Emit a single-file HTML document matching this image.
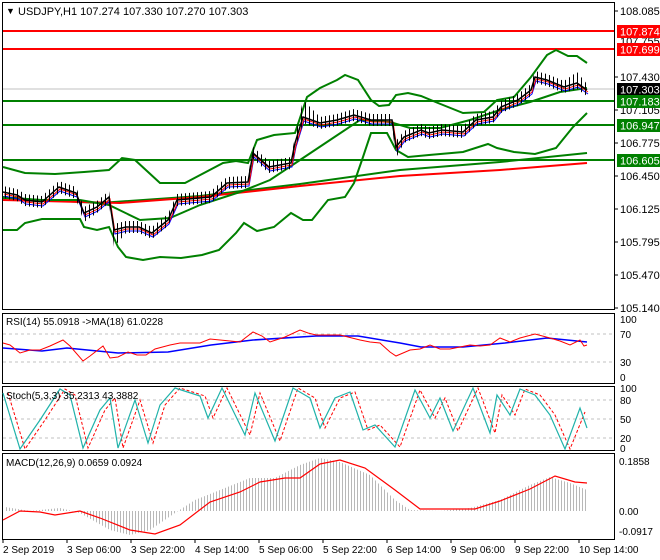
<!DOCTYPE html>
<html><head><meta charset="utf-8"><style>
body{margin:0;background:#fff;}
svg{display:block;font-family:"Liberation Sans",sans-serif;}
</style></head><body>
<svg width="660" height="560" viewBox="0 0 660 560" xmlns="http://www.w3.org/2000/svg">
<defs>
<pattern id="vl" width="3" height="10" patternUnits="userSpaceOnUse"><rect x="0" y="0" width="1" height="10" fill="#b8b8b8"/></pattern>
<pattern id="cl" width="4" height="10" patternUnits="userSpaceOnUse"><rect x="1" y="0" width="1" height="10" fill="#000"/></pattern>
</defs>
<rect width="660" height="560" fill="#fff"/>
<!-- panels -->
<rect x="2.5" y="2.5" width="612" height="307" fill="none" stroke="#000"/>
<rect x="2.5" y="313.5" width="612" height="70" fill="none" stroke="#000"/>
<rect x="2.5" y="386.5" width="612" height="64" fill="none" stroke="#000"/>
<rect x="2.5" y="453.5" width="612" height="86" fill="none" stroke="#000"/>

<!-- horizontal levels -->
<line x1="3" y1="89" x2="614" y2="89" stroke="#c0c0c0"/>
<line x1="3" y1="31" x2="614" y2="31" stroke="#f00" stroke-width="2"/>
<line x1="3" y1="49" x2="614" y2="49" stroke="#f00" stroke-width="2"/>
<line x1="3" y1="101" x2="614" y2="101" stroke="#008000" stroke-width="2"/>
<line x1="3" y1="125" x2="614" y2="125" stroke="#008000" stroke-width="2"/>
<line x1="3" y1="160" x2="614" y2="160" stroke="#008000" stroke-width="2"/>

<!-- MAs -->
<polyline fill="none" stroke="#008000" stroke-width="2" points="3,198 100,203 200,196 300,184 400,170 500,162 587,153"/>
<polyline fill="none" stroke="#f00" stroke-width="2" points="3,200 120,203 200,197 300,186 400,176 500,170 587,163"/>
<!-- bollinger -->
<polyline fill="none" stroke="#008000" stroke-width="2" points="3,167 25,173 55,174 84,172 109,170 122,158 135,160 160,183 185,183 223,163 236,161 248,163 257,140 274,135 295,133 307,97 320,88 337,80 345,75 358,80 371,100 379,106 389,105 396,95 408,93 421,96 438,103 463,113 484,112 497,100 514,97 531,77 547,55 556,50 568,56 577,56 587,63"/>
<polyline fill="none" stroke="#008000" stroke-width="2" points="3,230 17,230 25,223 42,219 80,219 84,227 97,230 109,227 118,247 126,257 143,260 160,257 181,258 202,255 219,250 236,233 244,223 257,231 274,227 291,213 303,220 312,220 328,200 345,197 354,183 362,160 371,133 387,133 396,150 408,157 429,155 463,152 488,144 497,148 514,152 535,154 556,148 573,127 587,113"/>
<polyline fill="none" stroke="#008000" stroke-width="2" points="3,197 40,200 80,200 109,205 140,220 170,218 200,205 240,192 270,180 300,160 330,140 360,120 390,122 410,128 440,128 470,120 500,110 530,102 560,92 587,88"/>
<!-- fast MAs -->
<polyline fill="none" stroke="#00f" stroke-width="1" transform="translate(1,4)" points="3,192 17,195 25,200 42,202 59,187 76,193 84,213 97,207 109,197 114,230 126,227 139,227 152,233 168,220 177,200 211,197 227,183 248,182 253,153 269,167 291,163 295,143 303,117 320,123 337,120 354,115 371,120 392,120 396,147 404,137 421,130 429,133 442,130 463,132 476,120 493,117 501,107 518,100 531,90 535,77 547,80 564,87 577,83 587,90"/>
<polyline fill="none" stroke="#f00" stroke-width="1" transform="translate(1,2)" points="3,192 17,195 25,200 42,202 59,187 76,193 84,213 97,207 109,197 114,230 126,227 139,227 152,233 168,220 177,200 211,197 227,183 248,182 253,153 269,167 291,163 295,143 303,117 320,123 337,120 354,115 371,120 392,120 396,147 404,137 421,130 429,133 442,130 463,132 476,120 493,117 501,107 518,100 531,90 535,77 547,80 564,87 577,83 587,90"/>
<!-- candles approx -->
<polygon fill="url(#cl)" points="3,186 17,189 25,194 42,196 59,181 76,187 84,207 97,201 109,191 114,224 126,221 139,221 152,227 168,214 177,194 211,191 227,177 248,176 253,147 269,161 291,157 295,137 303,100 320,117 337,114 354,109 371,114 392,114 396,141 404,131 421,124 429,127 442,124 463,126 476,114 493,111 501,101 518,94 531,84 535,71 547,74 564,81 577,72 587,84 587,96 577,89 564,93 547,86 535,83 531,96 518,106 501,113 493,123 476,126 463,138 442,136 429,139 421,136 404,143 396,158 392,126 371,126 354,121 337,126 320,129 303,123 295,149 291,169 269,173 253,159 248,188 227,189 211,203 177,206 168,226 152,239 139,233 126,233 114,247 109,203 97,213 84,222 76,199 59,193 42,208 25,206 17,201 3,198"/>
<polyline fill="none" stroke="#000" stroke-width="1.5" points="3,192 17,195 25,200 42,202 59,187 76,193 84,213 97,207 109,197 114,230 126,227 139,227 152,233 168,220 177,200 211,197 227,183 248,182 253,153 269,167 291,163 295,143 303,117 320,123 337,120 354,115 371,120 392,120 396,147 404,137 421,130 429,133 442,130 463,132 476,120 493,117 501,107 518,100 531,90 535,77 547,80 564,87 577,83 587,90"/>

<!-- header -->
<text x="6" y="14" font-size="9">▼</text>
<text x="18" y="15" font-size="11">USDJPY,H1  107.274 107.330 107.270 107.303</text>

<!-- right axis main -->
<g font-size="11" fill="#000">
<text x="620" y="15">108.085</text>
<text x="620" y="81">107.430</text>
<text x="620" y="114">107.105</text>
<text x="620" y="147">106.775</text>
<text x="620" y="180">106.450</text>
<text x="620" y="213">106.125</text>
<text x="620" y="246">105.795</text>
<text x="620" y="279">105.470</text>
<text x="620" y="312">105.140</text>
<text x="620" y="45">107.755</text>
</g>
<rect x="617" y="25" width="43" height="13" fill="#f00"/><text x="620" y="35.5" font-size="11" fill="#fff">107.874</text>
<rect x="617" y="43" width="43" height="13" fill="#f00"/><text x="620" y="53.5" font-size="11" fill="#fff">107.699</text>
<rect x="617" y="83" width="43" height="13" fill="#000"/><text x="620" y="93.5" font-size="11" fill="#fff">107.303</text>
<rect x="617" y="95" width="43" height="13" fill="#008000"/><text x="620" y="105.5" font-size="11" fill="#fff">107.183</text>
<rect x="617" y="119" width="43" height="13" fill="#008000"/><text x="620" y="129.5" font-size="11" fill="#fff">106.947</text>
<rect x="617" y="154" width="43" height="13" fill="#008000"/><text x="620" y="164.5" font-size="11" fill="#fff">106.605</text>
<g stroke="#000"><line x1="615" y1="11" x2="618" y2="11"/><line x1="615" y1="77" x2="618" y2="77"/><line x1="615" y1="110" x2="618" y2="110"/><line x1="615" y1="143" x2="618" y2="143"/><line x1="615" y1="176" x2="618" y2="176"/><line x1="615" y1="209" x2="618" y2="209"/><line x1="615" y1="242" x2="618" y2="242"/><line x1="615" y1="275" x2="618" y2="275"/><line x1="615" y1="308" x2="618" y2="308"/></g>

<!-- RSI -->
<line x1="3" y1="334" x2="614" y2="334" stroke="#c0c0c0" stroke-dasharray="3,3"/>
<line x1="3" y1="362" x2="614" y2="362" stroke="#c0c0c0" stroke-dasharray="3,3"/>
<polyline fill="none" stroke="#00f" stroke-width="1.5" points="3,348 42,351 67,348 118,353 168,352 211,345 253,340 316,336 358,336 400,343 421,347 463,347 505,343 547,338 587,342"/>
<polyline fill="none" stroke="#f00" stroke-width="1" points="3,343 10,345 20,353 30,350 40,350 50,346 63,340 70,346 83,361 90,356 103,346 110,358 118,357 128,352 137,355 146,355 155,349 170,345 180,343 200,343 210,339 220,340 240,342 253,332 262,336 270,342 285,337 300,330 308,333 316,335 340,335 360,340 370,342 380,343 390,352 396,356 410,350 420,349 430,345 440,349 450,349 460,347 470,345 480,346 490,345 500,338 510,342 520,338 535,334 550,338 560,341 570,345 580,340 584,346 587,345"/>
<text x="6" y="325" font-size="10">RSI(14) 55.0918  -&gt;MA(18) 61.0228</text>
<g font-size="10"><text x="620" y="323">100</text><text x="620" y="338">70</text><text x="620" y="366">30</text><text x="620" y="381">0</text></g>

<!-- Stoch -->
<line x1="3" y1="400" x2="614" y2="400" stroke="#c0c0c0" stroke-dasharray="3,3"/>
<line x1="3" y1="419" x2="614" y2="419" stroke="#c0c0c0" stroke-dasharray="3,3"/>
<line x1="3" y1="438" x2="614" y2="438" stroke="#c0c0c0" stroke-dasharray="3,3"/>
<polyline fill="none" stroke="#f00" stroke-dasharray="3,2" points="8,393 25,449 45,420 65,389 75,395 88,448 105,410 115,398 123,448 140,400 153,443 165,405 180,388 205,396 213,418 227,388 250,435 260,393 280,441 298,388 315,398 325,428 340,398 355,392 368,430 380,425 400,447 420,390 435,418 445,398 458,431 478,388 495,433 502,395 515,415 525,389 540,395 555,415 570,449 585,412"/>
<polyline fill="none" stroke="#20b2aa" stroke-width="1.2" points="3,393 20,449 40,420 60,389 70,395 83,448 100,410 110,398 118,448 135,400 148,443 160,405 175,388 200,396 208,418 222,388 245,435 255,393 275,441 293,388 310,398 320,428 335,398 350,392 363,430 375,425 395,447 415,390 430,418 440,398 453,431 473,388 490,433 497,395 510,415 520,389 535,395 550,415 565,449 580,408 587,428"/>
<text x="6" y="399" font-size="10">Stoch(5,3,3) 35.2313 43.3882</text>
<g font-size="10"><text x="620" y="392">100</text><text x="620" y="404">80</text><text x="620" y="423">50</text><text x="620" y="442">20</text><text x="620" y="452">0</text></g>

<!-- MACD -->
<polygon fill="url(#vl)" points="5,511 5,507 30,511 60,508 80,513 110,530 130,535 150,530 175,513 195,500 220,490 250,478 275,478 300,465 320,458 340,462 370,475 395,500 410,510 440,511 470,508 500,500 530,485 550,477 570,483 587,490 587,511"/>
<polyline fill="none" stroke="#f00" stroke-width="1.2" points="3,520 20,511 40,512 55,515 80,511 100,518 130,530 155,534 180,525 210,502 240,492 260,482 285,478 300,478 320,464 340,460 365,468 395,490 420,509 440,509 475,509 500,501 530,489 555,476 575,482 587,483"/>
<text x="6" y="466" font-size="10">MACD(12,26,9) 0.0659 0.0924</text>
<g font-size="10"><text x="619" y="465">0.1858</text><text x="619" y="515">0.00</text><text x="619" y="535">-0.0917</text></g>

<!-- time axis -->
<g font-size="10">
<text x="3" y="553">2 Sep 2019</text>
<text x="67" y="553">3 Sep 06:00</text>
<text x="131" y="553">3 Sep 22:00</text>
<text x="195" y="553">4 Sep 14:00</text>
<text x="259" y="553">5 Sep 06:00</text>
<text x="323" y="553">5 Sep 22:00</text>
<text x="387" y="553">6 Sep 14:00</text>
<text x="451" y="553">9 Sep 06:00</text>
<text x="515" y="553">9 Sep 22:00</text>
<text x="579" y="553">10 Sep 14:00</text>
</g>
<g stroke="#000"><line x1="3" y1="540" x2="3" y2="543"/><line x1="67" y1="540" x2="67" y2="543"/><line x1="131" y1="540" x2="131" y2="543"/><line x1="195" y1="540" x2="195" y2="543"/><line x1="259" y1="540" x2="259" y2="543"/><line x1="323" y1="540" x2="323" y2="543"/><line x1="387" y1="540" x2="387" y2="543"/><line x1="451" y1="540" x2="451" y2="543"/><line x1="515" y1="540" x2="515" y2="543"/><line x1="579" y1="540" x2="579" y2="543"/></g>
</svg>
</body></html>
